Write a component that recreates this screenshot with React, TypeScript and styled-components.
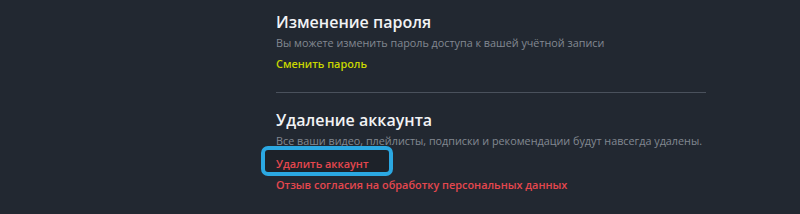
import React from 'react';
import styled, { createGlobalStyle } from 'styled-components';

const GlobalStyle = createGlobalStyle`
  html, body {
    margin: 0;
    padding: 0;
    background: #222831;
  }
  body {
    font-family: "Open Sans", "Noto Sans", sans-serif;
  }
`;

export default function App() {
  return (
    <>
      <GlobalStyle />
      <Page>
        <Column>
          <Section>
            <Title>Изменение пароля</Title>
            <Hint>Вы можете изменить пароль доступа к вашей учётной записи</Hint>
            <Action tone="accent">Сменить пароль</Action>
          </Section>
          <Divider />
          <Section>
            <Title>Удаление аккаунта</Title>
            <Hint>Все ваши видео, плейлисты, подписки и рекомендации будут навсегда удалены.</Hint>
            <Highlighted>
              <Action tone="danger">Удалить аккаунт</Action>
            </Highlighted>
            <Action tone="danger">Отзыв согласия на обработку персональных данных</Action>
          </Section>
        </Column>
      </Page>
    </>
  );
}

const Page = styled.div`
  width: 800px;
  height: 214px;
  background: #222831;
  padding: 11px 0 0 276px;
  box-sizing: border-box;
  overflow: hidden;
`;

const Column = styled.div`
  width: 430px;
  display: flex;
  flex-direction: column;
`;

const Section = styled.div`
  display: flex;
  flex-direction: column;
  align-items: flex-start;
`;

const Title = styled.h2`
  margin: 0;
  font-size: 16px;
  line-height: 22px;
  font-weight: 600;
  color: #f2f3f5;
`;

const Hint = styled.p`
  margin: 2px 0 0;
  font-size: 10.8px;
  line-height: 16px;
  white-space: nowrap;
  color: #838891;
`;

const Action = styled.a<{ tone: 'accent' | 'danger' }>`
  display: block;
  margin-top: 5px;
  font-size: 10.9px;
  line-height: 16px;
  font-weight: 600;
  color: ${({ tone }) => (tone === 'accent' ? '#c9d600' : '#e5474e')};
  cursor: pointer;
`;

const Highlighted = styled.div`
  position: relative;

  &::before {
    content: '';
    position: absolute;
    left: -15px;
    top: -3px;
    width: 132px;
    height: 30px;
    box-sizing: border-box;
    border: 4px solid #2ba8e2;
    border-radius: 7px;
    background: #1d2229;
  }

  & > a {
    position: relative;
    margin-top: 7px;
  }
`;

const Divider = styled.hr`
  width: 100%;
  margin: 20px 0 16px;
  border: none;
  border-top: 1px solid #4a515c;
`;
